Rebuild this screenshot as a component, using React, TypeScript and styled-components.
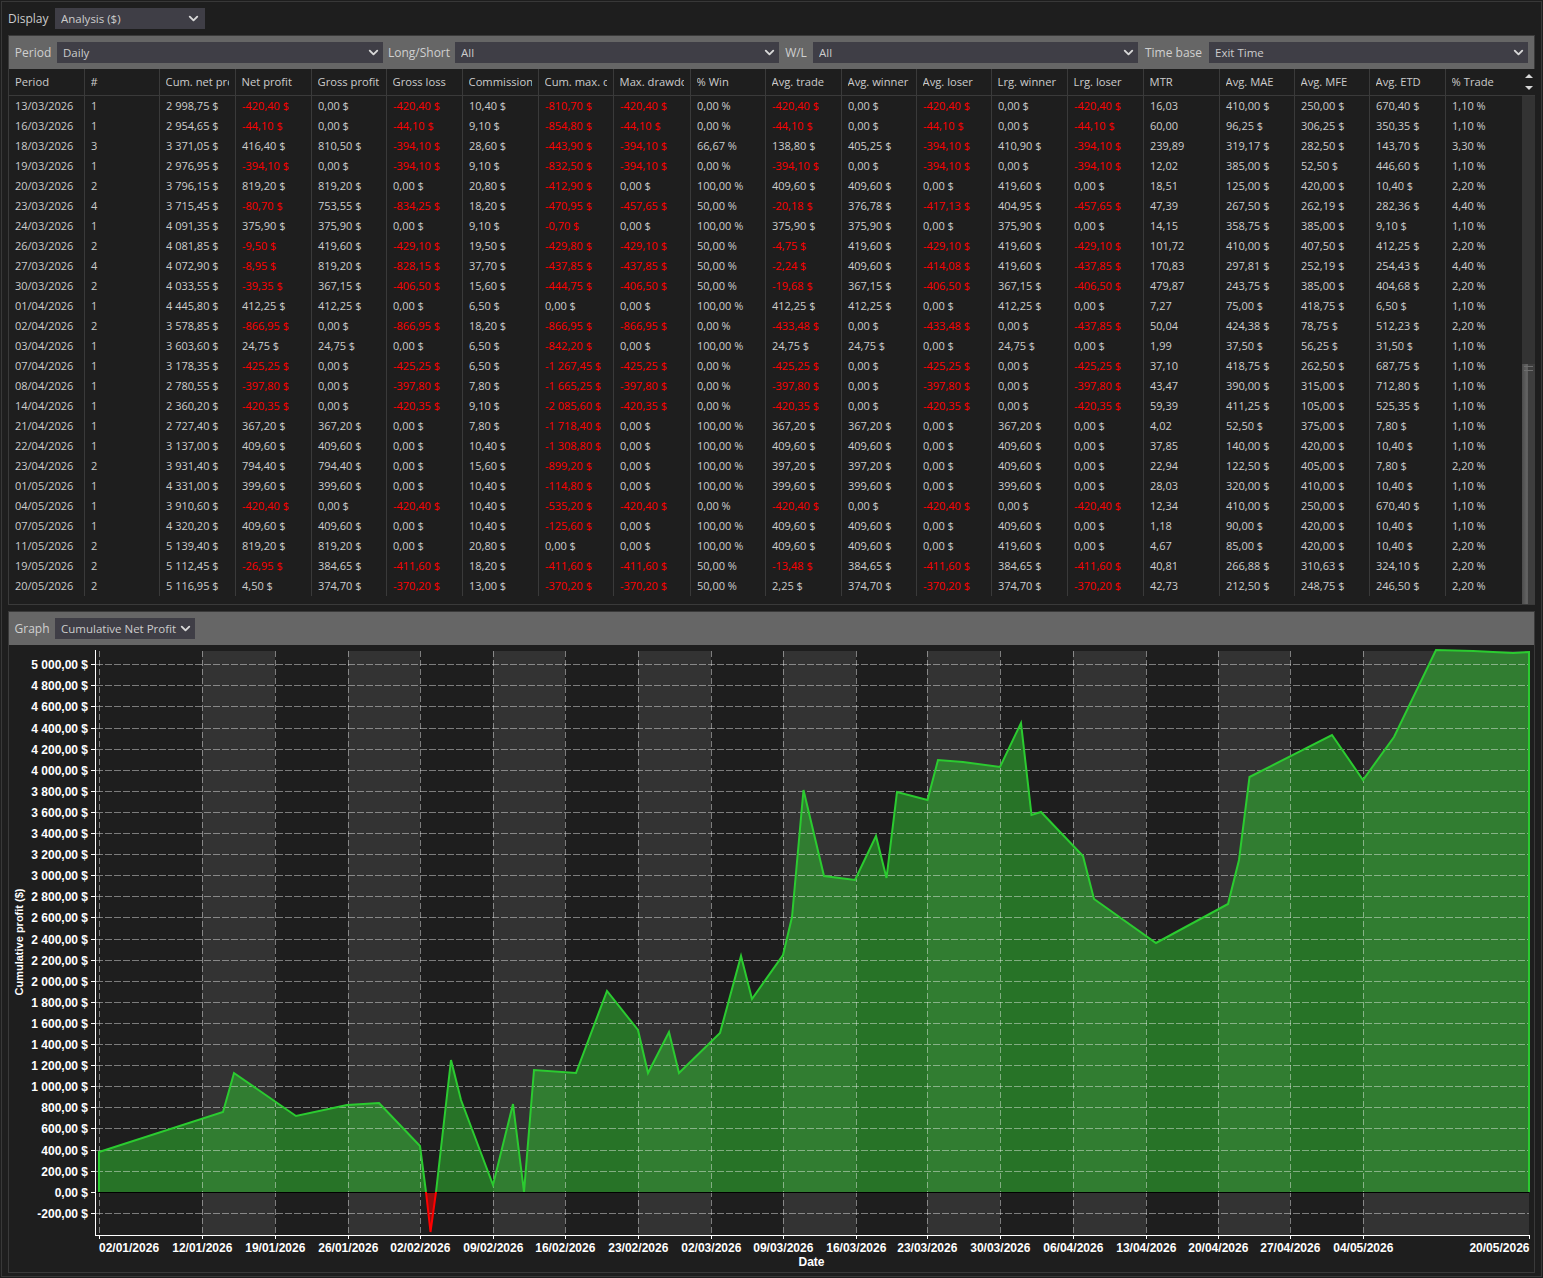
import React from 'react';
import styled, { createGlobalStyle } from 'styled-components';
import { ChevronDown } from 'lucide-react';

const UI_FONT = '"Open Sans", "Liberation Sans", sans-serif';

////////////////////// data [START]
const COLUMNS = [
  { title: 'Period', width: 76, unit: '' },
  { title: '#', width: 75, unit: '' },
  { title: 'Cum. net profit', width: 76, unit: ' $' },
  { title: 'Net profit', width: 76, unit: ' $' },
  { title: 'Gross profit', width: 75, unit: ' $' },
  { title: 'Gross loss', width: 76, unit: ' $' },
  { title: 'Commission', width: 76, unit: ' $' },
  { title: 'Cum. max. drawdown', width: 75, unit: ' $' },
  { title: 'Max. drawdown', width: 77, unit: ' $' },
  { title: '% Win', width: 75, unit: ' %' },
  { title: 'Avg. trade', width: 76, unit: ' $' },
  { title: 'Avg. winner', width: 75, unit: ' $' },
  { title: 'Avg. loser', width: 75, unit: ' $' },
  { title: 'Lrg. winner', width: 76, unit: ' $' },
  { title: 'Lrg. loser', width: 76, unit: ' $' },
  { title: 'MTR', width: 76, unit: '' },
  { title: 'Avg. MAE', width: 75, unit: ' $' },
  { title: 'Avg. MFE', width: 75, unit: ' $' },
  { title: 'Avg. ETD', width: 76, unit: ' $' },
  { title: '% Trade', width: 76, unit: ' %' },
];

const ROWS = [
  '13/03/2026|1|2 998,75|-420,40|0,00|-420,40|10,40|-810,70|-420,40|0,00|-420,40|0,00|-420,40|0,00|-420,40|16,03|410,00|250,00|670,40|1,10',
  '16/03/2026|1|2 954,65|-44,10|0,00|-44,10|9,10|-854,80|-44,10|0,00|-44,10|0,00|-44,10|0,00|-44,10|60,00|96,25|306,25|350,35|1,10',
  '18/03/2026|3|3 371,05|416,40|810,50|-394,10|28,60|-443,90|-394,10|66,67|138,80|405,25|-394,10|410,90|-394,10|239,89|319,17|282,50|143,70|3,30',
  '19/03/2026|1|2 976,95|-394,10|0,00|-394,10|9,10|-832,50|-394,10|0,00|-394,10|0,00|-394,10|0,00|-394,10|12,02|385,00|52,50|446,60|1,10',
  '20/03/2026|2|3 796,15|819,20|819,20|0,00|20,80|-412,90|0,00|100,00|409,60|409,60|0,00|419,60|0,00|18,51|125,00|420,00|10,40|2,20',
  '23/03/2026|4|3 715,45|-80,70|753,55|-834,25|18,20|-470,95|-457,65|50,00|-20,18|376,78|-417,13|404,95|-457,65|47,39|267,50|262,19|282,36|4,40',
  '24/03/2026|1|4 091,35|375,90|375,90|0,00|9,10|-0,70|0,00|100,00|375,90|375,90|0,00|375,90|0,00|14,15|358,75|385,00|9,10|1,10',
  '26/03/2026|2|4 081,85|-9,50|419,60|-429,10|19,50|-429,80|-429,10|50,00|-4,75|419,60|-429,10|419,60|-429,10|101,72|410,00|407,50|412,25|2,20',
  '27/03/2026|4|4 072,90|-8,95|819,20|-828,15|37,70|-437,85|-437,85|50,00|-2,24|409,60|-414,08|419,60|-437,85|170,83|297,81|252,19|254,43|4,40',
  '30/03/2026|2|4 033,55|-39,35|367,15|-406,50|15,60|-444,75|-406,50|50,00|-19,68|367,15|-406,50|367,15|-406,50|479,87|243,75|385,00|404,68|2,20',
  '01/04/2026|1|4 445,80|412,25|412,25|0,00|6,50|0,00|0,00|100,00|412,25|412,25|0,00|412,25|0,00|7,27|75,00|418,75|6,50|1,10',
  '02/04/2026|2|3 578,85|-866,95|0,00|-866,95|18,20|-866,95|-866,95|0,00|-433,48|0,00|-433,48|0,00|-437,85|50,04|424,38|78,75|512,23|2,20',
  '03/04/2026|1|3 603,60|24,75|24,75|0,00|6,50|-842,20|0,00|100,00|24,75|24,75|0,00|24,75|0,00|1,99|37,50|56,25|31,50|1,10',
  '07/04/2026|1|3 178,35|-425,25|0,00|-425,25|6,50|-1 267,45|-425,25|0,00|-425,25|0,00|-425,25|0,00|-425,25|37,10|418,75|262,50|687,75|1,10',
  '08/04/2026|1|2 780,55|-397,80|0,00|-397,80|7,80|-1 665,25|-397,80|0,00|-397,80|0,00|-397,80|0,00|-397,80|43,47|390,00|315,00|712,80|1,10',
  '14/04/2026|1|2 360,20|-420,35|0,00|-420,35|9,10|-2 085,60|-420,35|0,00|-420,35|0,00|-420,35|0,00|-420,35|59,39|411,25|105,00|525,35|1,10',
  '21/04/2026|1|2 727,40|367,20|367,20|0,00|7,80|-1 718,40|0,00|100,00|367,20|367,20|0,00|367,20|0,00|4,02|52,50|375,00|7,80|1,10',
  '22/04/2026|1|3 137,00|409,60|409,60|0,00|10,40|-1 308,80|0,00|100,00|409,60|409,60|0,00|409,60|0,00|37,85|140,00|420,00|10,40|1,10',
  '23/04/2026|2|3 931,40|794,40|794,40|0,00|15,60|-899,20|0,00|100,00|397,20|397,20|0,00|409,60|0,00|22,94|122,50|405,00|7,80|2,20',
  '01/05/2026|1|4 331,00|399,60|399,60|0,00|10,40|-114,80|0,00|100,00|399,60|399,60|0,00|399,60|0,00|28,03|320,00|410,00|10,40|1,10',
  '04/05/2026|1|3 910,60|-420,40|0,00|-420,40|10,40|-535,20|-420,40|0,00|-420,40|0,00|-420,40|0,00|-420,40|12,34|410,00|250,00|670,40|1,10',
  '07/05/2026|1|4 320,20|409,60|409,60|0,00|10,40|-125,60|0,00|100,00|409,60|409,60|0,00|409,60|0,00|1,18|90,00|420,00|10,40|1,10',
  '11/05/2026|2|5 139,40|819,20|819,20|0,00|20,80|0,00|0,00|100,00|409,60|409,60|0,00|419,60|0,00|4,67|85,00|420,00|10,40|2,20',
  '19/05/2026|2|5 112,45|-26,95|384,65|-411,60|18,20|-411,60|-411,60|50,00|-13,48|384,65|-411,60|384,65|-411,60|40,81|266,88|310,63|324,10|2,20',
  '20/05/2026|2|5 116,95|4,50|374,70|-370,20|13,00|-370,20|-370,20|50,00|2,25|374,70|-370,20|374,70|-370,20|42,73|212,50|248,75|246,50|2,20',
].map((row) => row.split('|'));

// chart coordinates are page pixels, the svg viewBox is placed to match
const PROFIT_LINE: [number, number][] = [
  [99, 1192], [99, 1152], [223, 1112], [234, 1073], [296, 1116], [347, 1105], [379, 1103],
  [420, 1146], [426, 1192],
];
const PROFIT_LINE_2: [number, number][] = [
  [436, 1192], [451, 1060], [461, 1100], [493, 1185], [513, 1104], [524, 1192], [534, 1070],
  [576, 1073], [607, 991], [638, 1030], [648, 1073], [669, 1032], [679, 1073], [720, 1033],
  [741, 956], [752, 999], [783, 955], [792, 917], [803.5, 790], [824, 876], [855, 880],
  [876, 836], [886.5, 878], [897, 792], [927.5, 800], [938, 760], [963, 762], [1000, 767],
  [1021, 723], [1031.5, 815], [1041, 812], [1083, 856], [1094, 899], [1156, 943], [1228, 904],
  [1239, 860], [1249.5, 777], [1332, 735], [1363, 780], [1394, 737], [1436, 650], [1473, 651],
  [1513, 653], [1529, 652], [1529, 1192],
];
const LOSS_LINE: [number, number][] = [[426, 1192], [430.5, 1232], [436, 1192]];

const X_TICKS = [
  { x: 99, label: '02/01/2026', anchor: 'start' },
  { x: 202, label: '12/01/2026' },
  { x: 275, label: '19/01/2026' },
  { x: 348, label: '26/01/2026' },
  { x: 420, label: '02/02/2026' },
  { x: 493, label: '09/02/2026' },
  { x: 565, label: '16/02/2026' },
  { x: 638, label: '23/02/2026' },
  { x: 711, label: '02/03/2026' },
  { x: 783, label: '09/03/2026' },
  { x: 856, label: '16/03/2026' },
  { x: 927, label: '23/03/2026' },
  { x: 1000, label: '30/03/2026' },
  { x: 1073, label: '06/04/2026' },
  { x: 1146, label: '13/04/2026' },
  { x: 1218, label: '20/04/2026' },
  { x: 1290, label: '27/04/2026' },
  { x: 1363, label: '04/05/2026' },
];
const BANDS = [
  [202, 275], [348, 420], [493, 565], [638, 711], [783, 856], [927, 1000], [1073, 1146],
  [1218, 1290], [1363, 1529],
];
// pixel rows of the y gridlines, 5 000 down to -200
const Y_ROWS = [
  664, 685, 706, 728, 749, 770, 791, 812, 833, 854, 875, 896, 917, 939, 960, 981, 1002, 1023,
  1044, 1065, 1086, 1107, 1128, 1150, 1171, 1192, 1213,
];
const Y_TICKS = Y_ROWS.map((row, i) => ({ y: row + 0.5, value: 5000 - i * 200 }));

const formatMoney = (value: number) => {
  const abs = Math.abs(value);
  const text = abs >= 1000 ? `${Math.floor(abs / 1000)} ${String(abs % 1000).padStart(3, '0')}` : `${abs}`;
  return `${value < 0 ? '-' : ''}${text},00 $`;
};
const toPoints = (list: [number, number][]) => list.map((p) => p.join(',')).join(' ');
////////////////////// data [END]

////////////////////// styled [START]
const GlobalStyle = createGlobalStyle`
  html, body {
    margin: 0;
    background: #1e1e1e;
  }
  * {
    box-sizing: border-box;
  }
`;

const Frame = styled.div`
  width: 1541px;
  height: 1276px;
  margin: 1px;
  padding: 6px 6px 0;
  border: 1px solid #383838;
  background: #1e1e1e;
  font-family: ${UI_FONT};
  font-size: 11.5px;
  color: #cccccc;
  overflow: hidden;
`;

const DisplayRow = styled.div`
  display: flex;
  align-items: center;
  height: 21px;
  margin-bottom: 6px;
`;

const DisplayLabel = styled.label`
  flex: none;
  width: 47px;
  font-size: 12px;
`;

const Panel = styled.section<{ $height: number }>`
  display: flex;
  flex-direction: column;
  width: 1527px;
  height: ${({ $height }) => $height}px;
  margin-bottom: 6px;
  border: 1px solid #3a3a3a;
`;

const FilterBar = styled.div`
  display: flex;
  align-items: center;
  flex: none;
  height: 33px;
  background: #666666;
`;

const FilterLabel = styled.label<{ $width: number }>`
  flex: none;
  width: ${({ $width }) => $width}px;
  font-size: 12px;
  text-align: center;
  color: #d0d0d0;
`;

const SelectWrap = styled.div<{ $width: number; $inset: number }>`
  position: relative;
  flex: none;
  width: ${({ $width }) => $width}px;
  height: 21px;
  background: #3f3e46;

  svg {
    position: absolute;
    top: 3px;
    right: ${({ $inset }) => $inset}px;
    color: #d8d8d8;
    pointer-events: none;
  }
`;

const NativeSelect = styled.select`
  display: block;
  width: 100%;
  height: 100%;
  padding: 0 0 0 6px;
  border: 0;
  outline: 0;
  appearance: none;
  background: transparent;
  color: #cccccc;
  font: inherit;
`;

const TableArea = styled.div`
  display: flex;
  flex: 1;
  min-height: 0;
`;

const Table = styled.table`
  flex: none;
  align-self: flex-start;
  width: 1512px;
  border-collapse: separate;
  border-spacing: 0;
  table-layout: fixed;
`;

const HeadCell = styled.th`
  height: 27px;
  padding: 0 6px 2px 5.6px;
  border-right: 1px solid #3a3a3a;
  border-bottom: 1px solid #3a3a3a;
  font-size: 11.2px;
  font-weight: 400;
  text-align: left;

  &:first-child {
    padding-left: 6px;
  }

  &:last-child {
    border-right: 0;
  }
`;

const HeadLabel = styled.div`
  overflow: hidden;
  white-space: nowrap;
`;

const BodyCell = styled.td<{ $negative: boolean }>`
  height: 20px;
  padding: 0 0 2px 6px;
  border-right: 1px solid #3a3a3a;
  color: ${({ $negative }) => ($negative ? '#ff0000' : '#cccccc')};
  font-size: 11px;
  white-space: nowrap;
  overflow: hidden;

  &:last-child {
    border-right: 0;
  }
`;

const Scrollbar = styled.div`
  display: flex;
  flex-direction: column;
  flex: none;
  width: 13px;
  background: #333333;
`;

const ScrollButtons = styled.div`
  display: flex;
  flex-direction: column;
  align-items: center;
  justify-content: center;
  gap: 8px;
  flex: none;
  height: 27px;
  border-bottom: 1px solid #3a3a3a;
  background: #1e1e1e;
`;

const Arrow = styled.span<{ $up?: boolean }>`
  width: 0;
  height: 0;
  border-left: 4px solid transparent;
  border-right: 4px solid transparent;
  border-${({ $up }) => ($up ? 'bottom' : 'top')}: 4px solid #d8d8d8;
`;

const ScrollThumb = styled.div`
  flex: none;
  height: 240px;
  margin-top: auto;
  padding: 2px 2px 0;
  background: linear-gradient(90deg, #4c4c4c 0, #626262 35%, #5c5c5c 50%, #3e3e3e 50%, #3e3e3e 100%);
`;

const ThumbGrip = styled.div`
  height: 5px;
  border-top: 1px solid #6e6e6e;
  border-bottom: 1px solid #6e6e6e;
`;

const Chart = styled.svg`
  display: block;
  flex: 1;
  min-height: 0;
`;

const AxisText = styled.text<{ $small?: boolean }>`
  fill: #ffffff;
  font-family: 'Liberation Sans', Arial, sans-serif;
  font-size: ${({ $small }) => ($small ? 11 : 12)}px;
  font-weight: 700;
`;
////////////////////// styled [END]

type SelectProps = {
  id: string;
  value: string;
  width: number;
  chevronInset?: number;
};
const Select: React.FC<SelectProps> = ({ id, value, width, chevronInset = 2 }) => (
  <SelectWrap $width={width} $inset={chevronInset}>
    <NativeSelect id={id} defaultValue={value}>
      <option>{value}</option>
    </NativeSelect>
    <ChevronDown size={15} strokeWidth={3} />
  </SelectWrap>
);

const ProfitChart = () => (
  <Chart width={1525} height={627} viewBox="9 645 1525 627">
    {BANDS.map(([from, to]) => (
      <rect key={from} x={from} y={651} width={to - from} height={584} fill="#333333" />
    ))}
    <polygon points={toPoints(PROFIT_LINE)} fill="rgb(48,200,48)" fillOpacity={0.5} />
    <polygon points={toPoints(PROFIT_LINE_2)} fill="rgb(48,200,48)" fillOpacity={0.5} />
    <polygon points={toPoints(LOSS_LINE)} fill="#ff0000" fillOpacity={0.5} />

    <g stroke="#ffffff" strokeOpacity={0.42} strokeDasharray="7 2" shapeRendering="crispEdges">
      {Y_TICKS.filter((t) => t.value !== 0).map((t) => (
        <line key={t.value} x1={96} x2={1529} y1={t.y} y2={t.y} />
      ))}
    </g>
    <g stroke="#ffffff" strokeOpacity={0.42} strokeDasharray="6 3" shapeRendering="crispEdges">
      {X_TICKS.map((t) => (
        <line key={t.x} x1={t.x + 0.5} x2={t.x + 0.5} y1={651} y2={1235} />
      ))}
    </g>
    <line x1={96} x2={1529} y1={1192.5} y2={1192.5} stroke="#000000" shapeRendering="crispEdges" />

    <polyline points={toPoints(PROFIT_LINE)} fill="none" stroke="#2bcb30" strokeWidth={2} />
    <polyline points={toPoints(PROFIT_LINE_2)} fill="none" stroke="#2bcb30" strokeWidth={2} />
    <polyline points={toPoints(LOSS_LINE)} fill="none" stroke="#ff0000" strokeWidth={2} />

    <g stroke="#ffffff" shapeRendering="crispEdges">
      <line x1={95.5} x2={95.5} y1={650} y2={1236} />
      <line x1={95} x2={1530} y1={1235.5} y2={1235.5} />
      {Y_TICKS.map((t) => (
        <line key={t.value} x1={91} x2={95} y1={t.y} y2={t.y} />
      ))}
      {X_TICKS.map((t) => (
        <line key={t.x} x1={t.x + 0.5} x2={t.x + 0.5} y1={1236} y2={1239} />
      ))}
      <line x1={1529.5} x2={1529.5} y1={1236} y2={1239} />
    </g>

    {Y_TICKS.map((t) => (
      <AxisText key={t.value} x={88} y={t.y + 4} textAnchor="end">
        {formatMoney(t.value)}
      </AxisText>
    ))}
    {X_TICKS.map((t) => (
      <AxisText
        key={t.x}
        x={t.anchor === 'start' ? t.x : t.x + 0.3}
        y={1252}
        textAnchor={t.anchor === 'start' ? 'start' : 'middle'}
      >
        {t.label}
      </AxisText>
    ))}
    <AxisText x={1529.5} y={1252} textAnchor="end">
      20/05/2026
    </AxisText>
    <AxisText x={811.5} y={1265.5} textAnchor="middle">
      Date
    </AxisText>
    <AxisText $small x={0} y={0} textAnchor="middle" transform="translate(23 942) rotate(-90)">
      Cumulative profit ($)
    </AxisText>
  </Chart>
);

const App = () => (
  <Frame>
    <GlobalStyle />
    <DisplayRow>
      <DisplayLabel htmlFor="display">Display</DisplayLabel>
      <Select id="display" value="Analysis ($)" width={150} chevronInset={4} />
    </DisplayRow>

    <Panel $height={570}>
      <FilterBar>
        <FilterLabel htmlFor="period" $width={48}>Period</FilterLabel>
        <Select id="period" value="Daily" width={326} />
        <FilterLabel htmlFor="side" $width={72}>Long/Short</FilterLabel>
        <Select id="side" value="All" width={324} />
        <FilterLabel htmlFor="wl" $width={34}>W/L</FilterLabel>
        <Select id="wl" value="All" width={325} />
        <FilterLabel htmlFor="timebase" $width={71}>Time base</FilterLabel>
        <Select id="timebase" value="Exit Time" width={319} />
      </FilterBar>
      <TableArea>
        <Table>
          <colgroup>
            {COLUMNS.map((col) => (
              <col key={col.title} width={col.width} />
            ))}
          </colgroup>
          <thead>
            <tr>
              {COLUMNS.map((col) => (
                <HeadCell key={col.title}>
                  <HeadLabel>{col.title}</HeadLabel>
                </HeadCell>
              ))}
            </tr>
          </thead>
          <tbody>
            {ROWS.map((row) => (
              <tr key={row[0]}>
                {row.map((cell, i) => (
                  <BodyCell key={COLUMNS[i].title} $negative={cell.startsWith('-')}>
                    {cell + COLUMNS[i].unit}
                  </BodyCell>
                ))}
              </tr>
            ))}
          </tbody>
        </Table>
        <Scrollbar>
          <ScrollButtons>
            <Arrow $up />
            <Arrow />
          </ScrollButtons>
          <ScrollThumb>
            <ThumbGrip />
          </ScrollThumb>
        </Scrollbar>
      </TableArea>
    </Panel>

    <Panel $height={662}>
      <FilterBar>
        <FilterLabel htmlFor="graph" $width={46}>Graph</FilterLabel>
        <Select id="graph" value="Cumulative Net Profit" width={140} />
      </FilterBar>
      <ProfitChart />
    </Panel>
  </Frame>
);

export default App;
